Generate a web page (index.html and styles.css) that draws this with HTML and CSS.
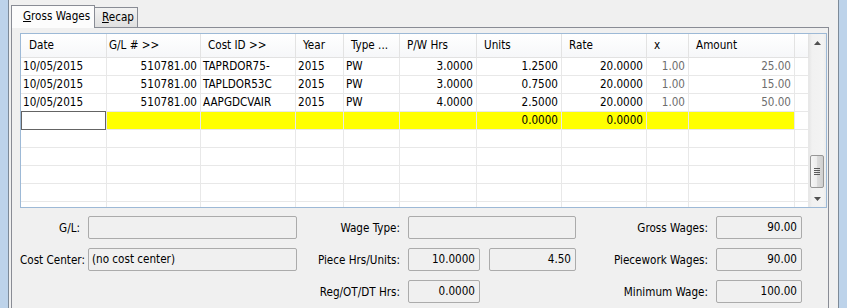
FILE: index.html
```html
<!DOCTYPE html>
<html>
<head>
<meta charset="utf-8">
<title>Gross Wages</title>
<link rel="stylesheet" href="styles.css">
</head>
<body>
<div class="app">
  <div class="edge edge-l"></div>
  <div class="client">
    <div class="tabs">
      <div class="tab active"><u>G</u>ross Wages</div>
      <div class="tab other"><u>R</u>ecap</div>
    </div>
    <div class="panel">
      <div class="grid">
        <div class="grid-main">
          <div class="row head">
            <div class="c w1 hp8">Date</div>
            <div class="c w2 hp2">G/L # &gt;&gt;</div>
            <div class="c w3 hp">Cost ID &gt;&gt;</div>
            <div class="c w4 hp">Year</div>
            <div class="c w5 hp">Type ...</div>
            <div class="c w6 hp">P/W Hrs</div>
            <div class="c w7 hp">Units</div>
            <div class="c w8 hp">Rate</div>
            <div class="c w9 hp">x</div>
            <div class="c w10 hp">Amount</div>
            <div class="c w11"></div>
          </div>
          <div class="row">
            <div class="c w1 l">10/05/2015</div>
            <div class="c w2 r">510781.00</div>
            <div class="c w3 l">TAPRDOR75-</div>
            <div class="c w4 l">2015</div>
            <div class="c w5 l">PW</div>
            <div class="c w6 r">3.0000</div>
            <div class="c w7 r">1.2500</div>
            <div class="c w8 r">20.0000</div>
            <div class="c w9 r g">1.00</div>
            <div class="c w10 r g">25.00</div>
            <div class="c w11"></div>
          </div>
          <div class="row">
            <div class="c w1 l">10/05/2015</div>
            <div class="c w2 r">510781.00</div>
            <div class="c w3 l">TAPLDOR53C</div>
            <div class="c w4 l">2015</div>
            <div class="c w5 l">PW</div>
            <div class="c w6 r">3.0000</div>
            <div class="c w7 r">0.7500</div>
            <div class="c w8 r">20.0000</div>
            <div class="c w9 r g">1.00</div>
            <div class="c w10 r g">15.00</div>
            <div class="c w11"></div>
          </div>
          <div class="row">
            <div class="c w1 l">10/05/2015</div>
            <div class="c w2 r">510781.00</div>
            <div class="c w3 l">AAPGDCVAIR</div>
            <div class="c w4 l">2015</div>
            <div class="c w5 l">PW</div>
            <div class="c w6 r">4.0000</div>
            <div class="c w7 r">2.5000</div>
            <div class="c w8 r">20.0000</div>
            <div class="c w9 r g">1.00</div>
            <div class="c w10 r g">50.00</div>
            <div class="c w11"></div>
          </div>
          <div class="row">
            <div class="c w1 l editing"></div>
            <div class="c w2 r new"></div>
            <div class="c w3 l new"></div>
            <div class="c w4 l new"></div>
            <div class="c w5 l new"></div>
            <div class="c w6 r new"></div>
            <div class="c w7 r new">0.0000</div>
            <div class="c w8 r new">0.0000</div>
            <div class="c w9 r new"></div>
            <div class="c w10 r new"></div>
            <div class="c w11"></div>
          </div>
          <div class="row"><div class="c w1"></div><div class="c w2"></div><div class="c w3"></div><div class="c w4"></div><div class="c w5"></div><div class="c w6"></div><div class="c w7"></div><div class="c w8"></div><div class="c w9"></div><div class="c w10"></div><div class="c w11"></div></div>
          <div class="row"><div class="c w1"></div><div class="c w2"></div><div class="c w3"></div><div class="c w4"></div><div class="c w5"></div><div class="c w6"></div><div class="c w7"></div><div class="c w8"></div><div class="c w9"></div><div class="c w10"></div><div class="c w11"></div></div>
          <div class="row"><div class="c w1"></div><div class="c w2"></div><div class="c w3"></div><div class="c w4"></div><div class="c w5"></div><div class="c w6"></div><div class="c w7"></div><div class="c w8"></div><div class="c w9"></div><div class="c w10"></div><div class="c w11"></div></div>
          <div class="row"><div class="c w1"></div><div class="c w2"></div><div class="c w3"></div><div class="c w4"></div><div class="c w5"></div><div class="c w6"></div><div class="c w7"></div><div class="c w8"></div><div class="c w9"></div><div class="c w10"></div><div class="c w11"></div></div>
          <div class="row"><div class="c w1"></div><div class="c w2"></div><div class="c w3"></div><div class="c w4"></div><div class="c w5"></div><div class="c w6"></div><div class="c w7"></div><div class="c w8"></div><div class="c w9"></div><div class="c w10"></div><div class="c w11"></div></div>
        </div>
        <div class="vscroll">
          <div class="sbtn">
            <svg width="7" height="4" viewBox="0 0 7 4"><path d="M3.5 0 L7 4 L0 4 Z" fill="#505050"/></svg>
          </div>
          <div class="track">
            <div class="thumb">
              <svg width="6" height="7" viewBox="0 0 6 7"><path d="M0 0.5H6M0 2.5H6M0 4.5H6M0 6.5H6" stroke="#5a5a5a" stroke-width="1"/></svg>
            </div>
          </div>
          <div class="sbtn">
            <svg width="7" height="4" viewBox="0 0 7 4"><path d="M0 0 L7 0 L3.5 4 Z" fill="#505050"/></svg>
          </div>
        </div>
      </div>

      <div class="form">
        <div class="lbl">G/L:</div>
        <div class="box"></div>
        <div class="lbl">Wage Type:</div>
        <div class="box span3"></div>
        <div class="lbl">Gross Wages:</div>
        <div class="box r">90.00</div>

        <div class="lbl">Cost Center:</div>
        <div class="box">(no cost center)</div>
        <div class="lbl">Piece Hrs/Units:</div>
        <div class="box r">10.0000</div>
        <div class="box r at6">4.50</div>
        <div class="lbl">Piecework Wages:</div>
        <div class="box r">90.00</div>

        <div class="lbl at3">Reg/OT/DT Hrs:</div>
        <div class="box r">0.0000</div>
        <div class="lbl at7">Minimum Wage:</div>
        <div class="box r">100.00</div>
      </div>
    </div>
  </div>
  <div class="edge edge-r"></div>
</div>
</body>
</html>
```

FILE: styles.css
```css
* { box-sizing: border-box; }
html, body { margin: 0; padding: 0; }
body {
  width: 847px;
  height: 308px;
  overflow: hidden;
  background: #f0f0f0;
  font-family: "DejaVu Sans Condensed", "DejaVu Sans", sans-serif;
  font-stretch: condensed;
  font-size: 11.6px;
  line-height: 13px;
  color: #000;
}
.app { display: flex; height: 308px; overflow: hidden; }
.edge { width: 9px; flex: none; background: #bdd3ea; }
.edge-l { border-right: 1px solid #7d8a98; }
.edge-r { border-left: 1px solid #7d8a98; }
.client { flex: 1; min-width: 0; padding: 5px 9px 0 2px; overflow: hidden; }

/* tabs */
.tabs { display: flex; align-items: flex-end; height: 22px; }
.tab { border: 1px solid #898c95; border-bottom: none; white-space: nowrap; flex: none; }
.tab.active {
  width: 84px; height: 23px; margin-bottom: -1px;
  background: #fcfcfc; padding: 4px 0 0 11px;
  position: relative; z-index: 1;
}
.tab.other {
  width: 44px; height: 20px; margin-left: -1px;
  background: linear-gradient(#f2f2f2, #e0e0e0);
  padding: 3px 0 0 7px;
}

/* panel */
.panel {
  border: 1px solid #898c95;
  background: #f0f0f0;
  padding: 5px 1px 10px 8px;
  height: 300px;
}

/* grid */
.grid {
  display: flex;
  width: 807px;
  height: 175px;
  border: 1px solid #9db9d6;
  background: #fff;
}
.grid-main { width: 788px; flex: none; overflow: hidden; }
.row { display: flex; height: 18px; border-bottom: 1px solid #e8e8e8; }
.row.head {
  height: 24px;
  border-bottom: 1px solid #e2e2e2;
  background: linear-gradient(#ffffff, #f6f7f9);
}
.c {
  flex: none;
  border-right: 1px solid #e8e8e8;
  line-height: 17px;
  white-space: nowrap;
  overflow: hidden;
}
.head .c { line-height: 23px; border-right-color: #e3e3e3; }
.hp { padding-left: 7px; }
.hp8 { padding-left: 8px; }
.hp2 { padding-left: 2px; }
.l { padding-left: 2px; }
.r { text-align: right; padding-right: 3px; }
.g { color: #6d6d6d; }
.new { background: #ffff00; }
.editing { position: relative; overflow: visible; }
.editing::after {
  content: "";
  position: absolute;
  left: 0; right: 0; top: -1px; bottom: -1px;
  border: 1px solid #646464;
}
.w1 { width: 86px; }
.w2 { width: 94px; }
.w3 { width: 95px; }
.w4 { width: 48px; }
.w5 { width: 56px; }
.w6 { width: 77px; }
.w7 { width: 85px; }
.w8 { width: 85px; }
.w9 { width: 42px; }
.w10 { width: 106px; }
.w11 { width: 14px; }

/* scrollbar */
.vscroll {
  width: 17px;
  flex: none;
  display: flex;
  flex-direction: column;
  background: linear-gradient(90deg, #e6e6e6, #f1f1f1 3px, #f3f3f3 14px, #ececec);
}
.sbtn { height: 17px; flex: none; display: flex; align-items: center; justify-content: center; }
.track { flex: 1; display: flex; flex-direction: column; justify-content: flex-end; padding-bottom: 2px; }
.thumb {
  height: 33px;
  width: 14px;
  margin-left: 1px;
  border: 1px solid #979797;
  border-radius: 2px;
  background: linear-gradient(90deg, #f6f6f6, #ececec 50%, #dcdcdc 51%, #cfcfcf);
  display: flex;
  align-items: center;
  justify-content: center;
}

/* form */
.form {
  display: grid;
  grid-template-columns: 68px 209px 111px 72px 9px 87px 140px 86px;
  grid-auto-rows: 23px;
  row-gap: 9px;
  margin-top: 8px;
}
.lbl { text-align: right; padding: 6px 8px 0 0; white-space: nowrap; }
.box {
  border: 1px solid #ababab;
  border-radius: 2px;
  background: #f0f0f0;
  padding: 4px 4px 0 3px;
  white-space: nowrap;
}
.box.r { text-align: right; padding-right: 4px; }
.span3 { grid-column: span 3; }
.at3 { grid-column-start: 3; }
.at6 { grid-column-start: 6; }
.at7 { grid-column-start: 7; }
```
